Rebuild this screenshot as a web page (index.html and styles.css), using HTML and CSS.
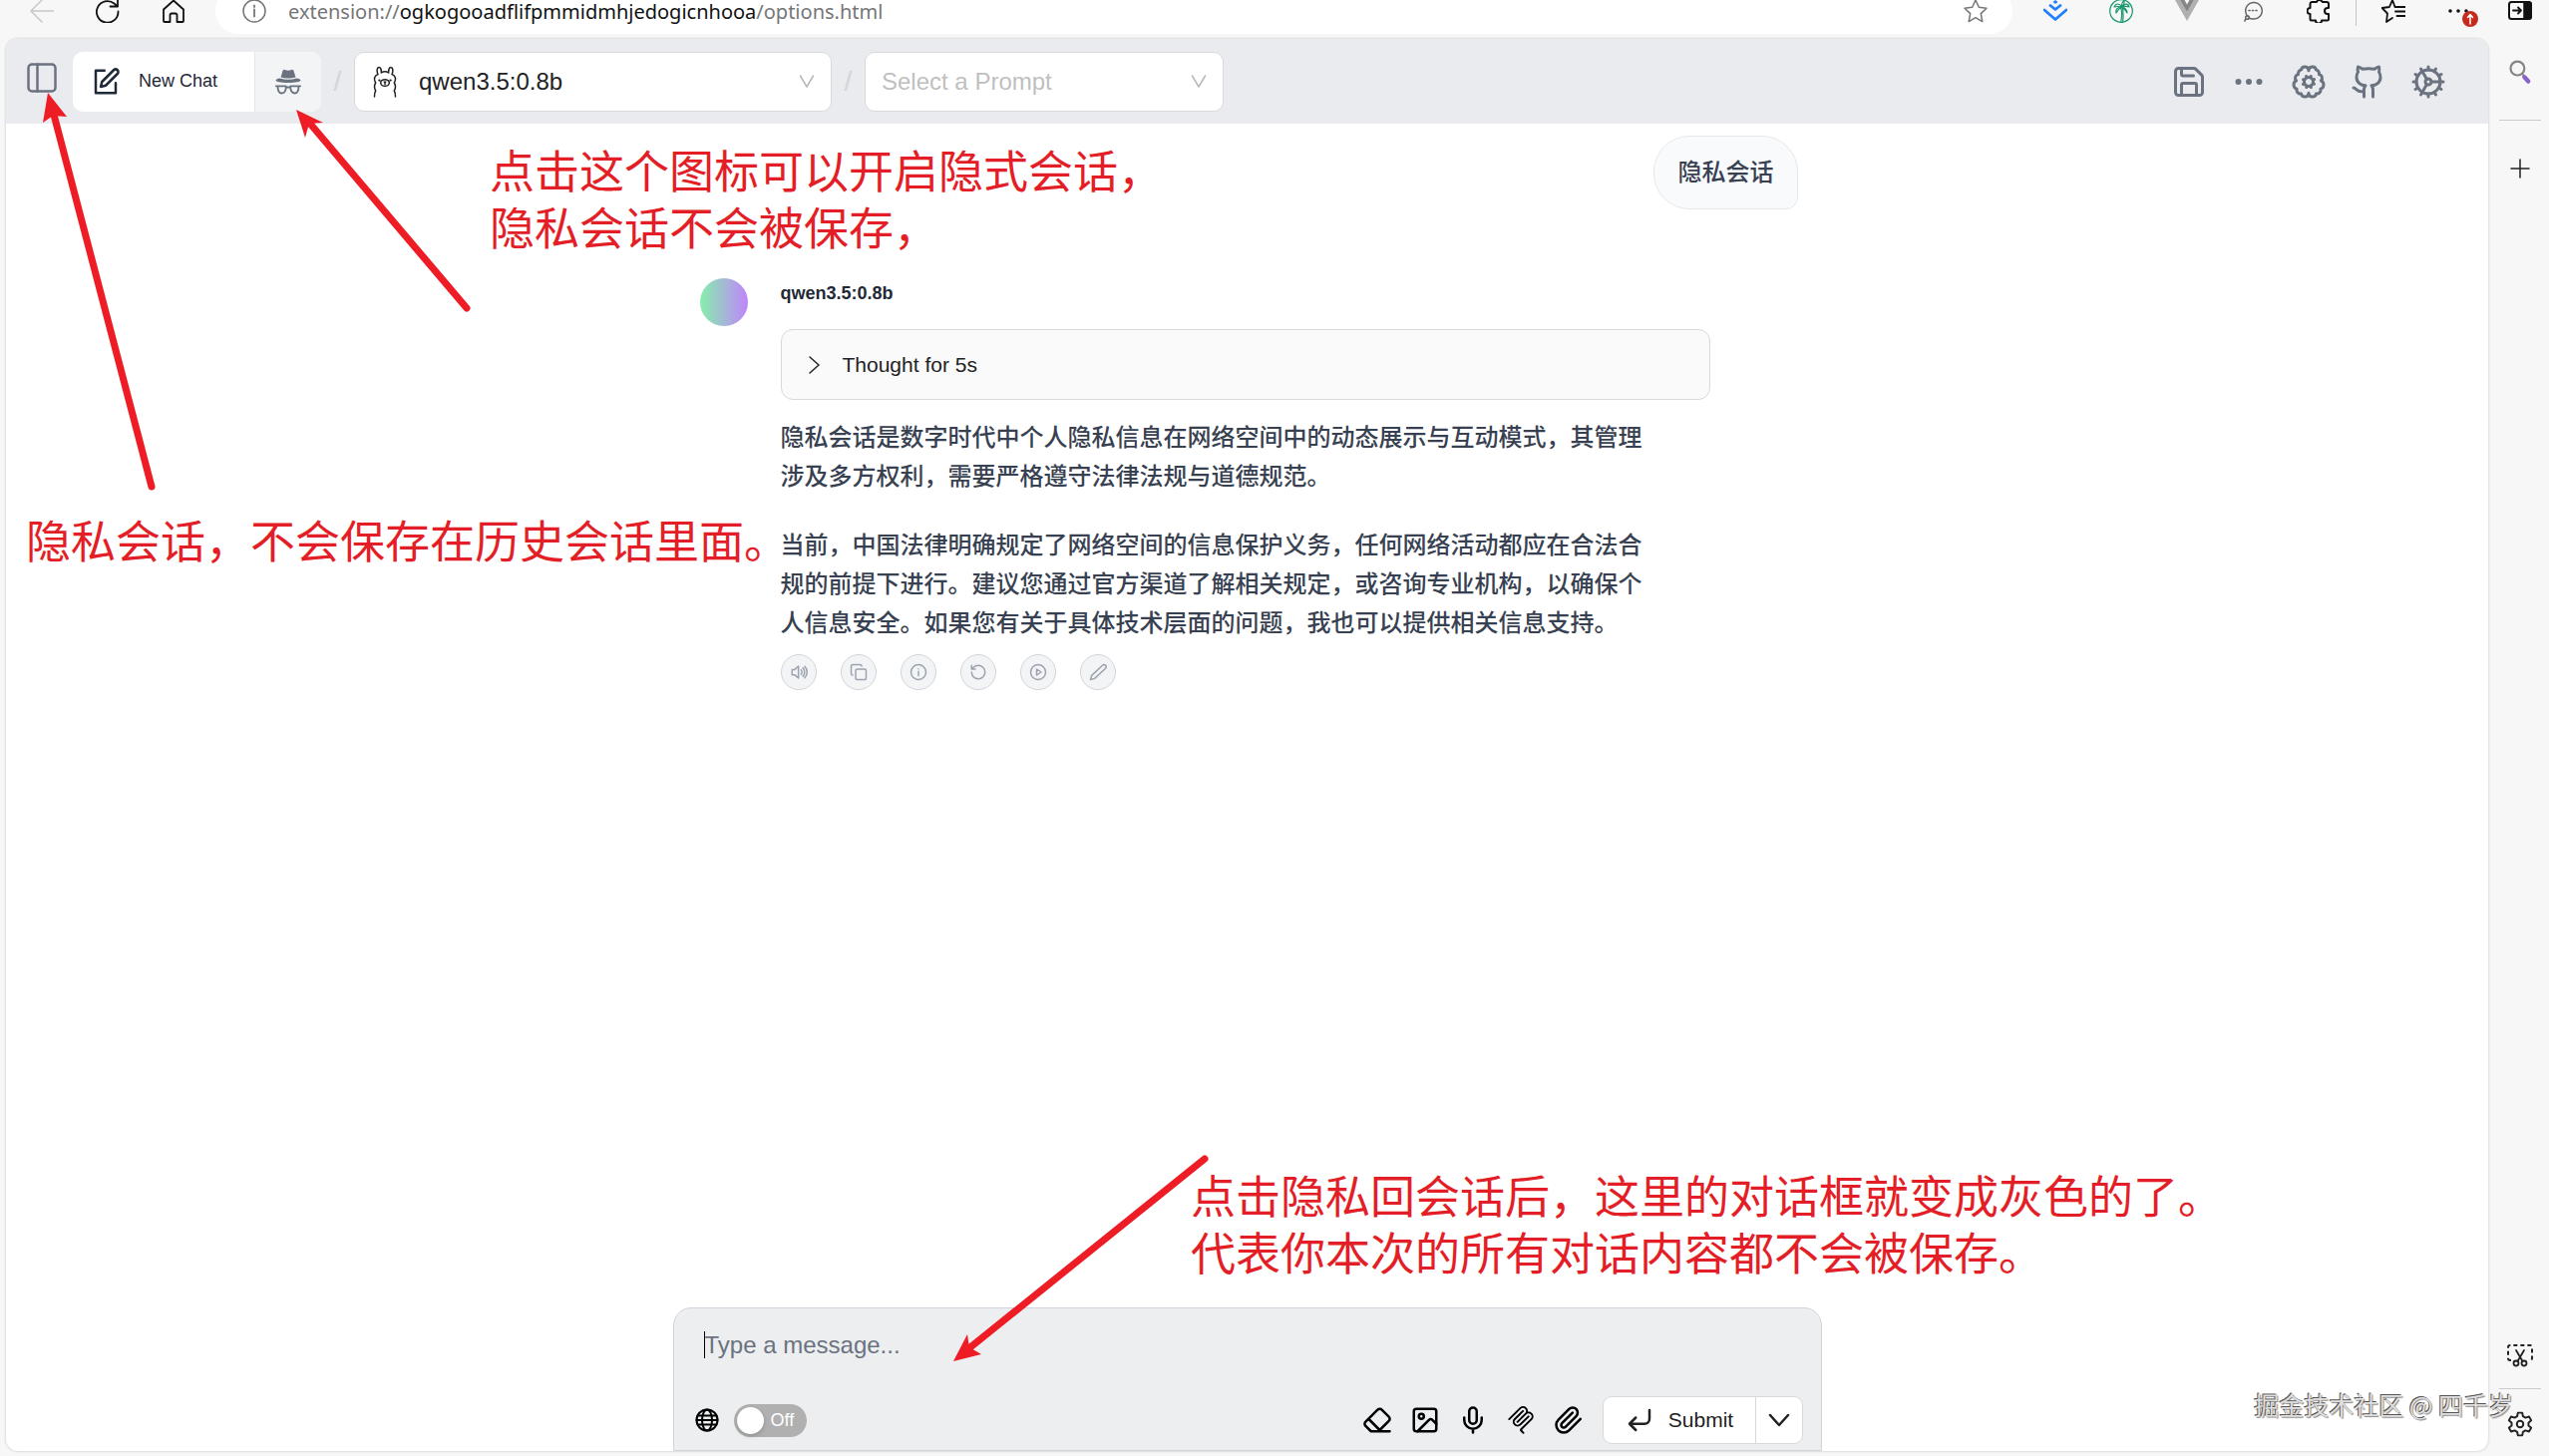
FILE: index.html
```html
<!DOCTYPE html>
<html lang="zh-CN">
<head>
    <meta charset="UTF-8">
    <meta name="viewport" content="width=device-width, initial-scale=1.0">
    <title>Options</title>
    <link rel="stylesheet" href="styles.css">
</head>
<body>

    <!-- Browser bar -->
    <div class="toolbar">
        <div class="nav">
            <button aria-label="Back" class="faded"><svg viewBox="0 0 24 24"><path d="M24 12H1M12 1 1 12l11 11"/></svg></button>
            <button aria-label="Refresh"><svg viewBox="0 0 24 24"><path d="M22.500 12.500A10.800 10.800 0 1 1 18.500 4.500l3 2.500M22 0v7.500h-7.500" stroke-width="1.800"/></svg></button>
            <button aria-label="Home"><svg viewBox="0 0 24 24"><path d="M2 10.500 12 1.500l10 9V22a1 1 0 0 1-1 1h-5.500v-7a1.500 1.500 0 0 0-1.500-1.500h-4A1.500 1.500 0 0 0 8.500 16v7H3a1 1 0 0 1-1-1z" stroke-width="1.800"/></svg></button>
        </div>
        <div class="address">
            <svg class="info" viewBox="0 0 24 24"><circle cx="12" cy="12" r="11"/><path d="M12 10.500v7M12 6.500v1.500" stroke-width="1.800"/></svg>
            <div class="url">extension://<b>ogkogooadflifpmmidmhjedogicnhooa</b>/options.html</div>
            <button aria-label="Favorite" class="star"><svg viewBox="0 0 24 24"><path d="m12 1 3.300 7.200 7.700 1-5.700 5.400 1.500 8L12 18.700l-6.800 3.900 1.500-8L1 9.200l7.700-1z"/></svg></button>
        </div>
        <div class="tools">
            <button aria-label="Juejin"><svg viewBox="0 0 24 24" class="juejin"><path d="m9.500 3 2.500-2 2.500 2L12 5z" fill="currentColor" stroke="none"/><path d="m7 6.500 5 4 5-4M1 11l11 9.500L23 11" stroke-width="2.800"/></svg></button>
            <button aria-label="Palm"><svg viewBox="0 0 24 24" class="palm"><circle cx="12" cy="12" r="11.300"/><path d="M12 9c.8 4 .8 9-.2 13.500M13.500 9c.6 4 .6 9 .2 13.500M13 8C10 4 6.500 4 5 8c3-1 5-.5 8 0zm0 0c3-4 6-3.500 7 0-2-1-4-1-7 0zm0 0C9 8 6 10 7 14c1.500-3 3-4.500 6-6zm0 0c3 1 5 2.500 5 6-1.500-2.500-3-4.500-5-6zm0 0c-1-3 0-5 2-6.500C15.500 4 15 6 13 8z"/></svg></button>
            <button aria-label="Vue"><svg viewBox="0 0 24 24"><path d="M0 1h5l7 12 7-12h5L12 22z" fill="#b0b0b0" stroke="none"/><path d="M5 1h4.500L12 5.500 14.500 1H19l-7 12z" fill="#858585" stroke="none"/></svg></button>
            <button aria-label="Chat" class="grey"><svg viewBox="0 0 24 24"><path d="M7 17.500A8.300 8.300 0 1 1 12 20a9 9 0 0 1-4-1"/><circle cx="6.500" cy="18.500" r="1.800"/><path d="M4.500 20.500 4 22M8 11.500h1M11.500 11.500h1M15 11.500h1" stroke-width="1.700"/></svg></button>
            <button aria-label="Extensions"><svg viewBox="0 0 24 24"><path d="M5 3h5a3 3 0 0 1 5-1l1 1h4a2 2 0 0 1 2 2v4h-1a3 3 0 0 0 0 6h1v5a1.500 1.500 0 0 1-1.500 1.500H15a3 3 0 0 1-6 0H5A1.500 1.500 0 0 1 3.500 20v-5a3 3 0 0 1 0-6V5A2 2 0 0 1 5 3z" stroke-width="2"/></svg></button>
            <span class="line"></span>
            <button aria-label="Favorites"><svg viewBox="0 0 24 24"><path d="M17 8h-3.500L11 1 8 8l-7.500 1 5.500 5.500L5 23l6-4M15.500 8H24M14 12.500h10M15.500 17H24" stroke-width="1.800"/></svg></button>
            <button aria-label="More" class="more"><svg viewBox="0 0 24 24"><g fill="currentColor" stroke="none"><circle cx="3" cy="12" r="1.800"/><circle cx="11" cy="12" r="1.800"/><circle cx="19" cy="12" r="1.800"/></g></svg>
                <svg class="badge" viewBox="0 0 16 16"><circle cx="8" cy="8" r="8" fill="#c42b1c" stroke="none"/><path d="M8 13V4M5.500 6.500 8 3.500l2.500 3" stroke="#fff"/></svg></button>
            <button aria-label="Sidebar" class="last"><svg viewBox="0 0 24 24"><rect x="1" y="3" width="22" height="17" rx="2.500" stroke-width="2"/><path d="M16 3h5a2 2 0 0 1 2 2v13a2 2 0 0 1-2 2h-5z" fill="currentColor"/><path d="M5 11.500h8M10 8.500l3 3-3 3" stroke-width="1.800"/></svg></button>
        </div>
    </div>

    <div class="window">
        <section class="app">

            <header class="header">
                <button class="panel" aria-label="Toggle sidebar"><svg viewBox="0 0 30 30"><rect x="1.500" y="1.500" width="27" height="27" rx="3.500"/><path d="M10.500 1.500v27"/></svg></button>
                <div class="group">
                    <button class="new">
                        <svg viewBox="0 0 24 24"><path d="M11 3H4v18h16v-8"/><path d="M18.400 2.600a2.100 2.100 0 0 1 3 3L12 15l-4 1 1-4z"/></svg>
                        New Chat
                    </button>
                    <button class="private" aria-label="Private chat">
                        <svg viewBox="0 0 26 26"><g fill="currentColor" stroke="none"><path d="M5.500 8.500 7.500 2C7.800 1 8.700.6 9.700 1c2 .9 4.600.9 6.600 0 1-.4 1.900 0 2.200 1l2 6.500c-4.500 1.300-10.500 1.300-15 0z"/><path d="M4.500 9.500c5.500 1.600 11.500 1.600 17 0 2 .4 4 1.200 4 2 0 1.400-5 2.500-12.500 2.500S.5 12.900.5 11.500c0-.8 2-1.600 4-2z"/></g><path d="M.8 17.300h9.700l.8 1.200h3.400l.8-1.200h9.700M2.500 17.500c0 4 1 7 4 7s4.300-3 4.300-6.500M23.500 17.500c0 4-1 7-4 7s-4.300-3-4.300-6.500"/></svg>
                    </button>
                </div>
                <span class="slash">/</span>
                <div class="select model">
                    <svg class="llama" viewBox="0 0 24 32"><path d="M1.500 31c0-3 .2-4.500 1.200-6-1.500-2.500-1.500-5.500 0-8C.5 13.500 1.500 9.500 5 8.500 3.500 5 4 1.500 6 1.500c1.800 0 2.500 2.500 2.300 5.500C10.500 5.500 13.500 5.500 15.700 7c-.2-3 .5-5.500 2.300-5.500 2 0 2.500 3.500 1 7 3.500 1 4.500 5 2.300 8.500 1.500 2.500 1.500 5.500 0 8 1 1.500 1.200 3 1.200 6"/><ellipse cx="12" cy="17" rx="4.300" ry="3.300"/><path d="M12 17v1.500M11.200 16l.8.700.8-.7"/><path d="M6.300 14.500h.2M17.500 14.500h.2" stroke-width="2.200"/></svg>
                    <select aria-label="Model"><option>qwen3.5:0.8b</option></select>
                    <svg class="arrow" viewBox="0 0 16 16"><path d="m1.500 2 6.500 11L14.500 2"/></svg>
                </div>
                <span class="slash">/</span>
                <div class="select prompt">
                    <select aria-label="Prompt"><option>Select a Prompt</option></select>
                    <svg class="arrow" viewBox="0 0 16 16"><path d="m1.500 2 6.500 11L14.500 2"/></svg>
                </div>
                <div class="actions">
                    <button aria-label="Save"><svg viewBox="0 0 24 24"><path d="M15.200 3a2 2 0 0 1 1.400.6l3.800 3.800a2 2 0 0 1 .6 1.400V19a2 2 0 0 1-2 2H5a2 2 0 0 1-2-2V5a2 2 0 0 1 2-2z"/><path d="M17 21v-7a1 1 0 0 0-1-1H8a1 1 0 0 0-1 1v7M7 3v4a1 1 0 0 0 1 1h7"/></svg></button>
                    <button aria-label="More"><svg viewBox="0 0 24 24"><g fill="currentColor" stroke-width="1"><circle cx="5" cy="12" r="1.500"/><circle cx="12" cy="12" r="1.500"/><circle cx="19" cy="12" r="1.500"/></g></svg></button>
                    <button aria-label="Knowledge"><svg viewBox="0 0 24 24"><circle cx="12" cy="12" r="3"/><path d="M12 4.500a2.500 2.500 0 0 0-4.960-.46 2.500 2.500 0 0 0-1.980 3 2.500 2.500 0 0 0-1.320 4.240 3 3 0 0 0 .34 5.580 2.500 2.500 0 0 0 2.960 3.080A2.500 2.500 0 0 0 9.500 22c1.210 0 2.500-.74 2.500-2.500m0-15a2.500 2.500 0 0 1 4.960-.46 2.500 2.500 0 0 1 1.980 3 2.500 2.500 0 0 1 1.320 4.240 3 3 0 0 1-.34 5.580 2.500 2.500 0 0 1-2.960 3.080A2.500 2.500 0 0 1 14.500 22c-1.210 0-2.500-.74-2.500-2.500M15.700 10.400l-.9.400M9.200 13.200l-.9.400M13.600 15.700l-.4-.9M10.800 9.200l-.4-.9M15.700 13.500l-.9-.4M9.200 10.900l-.9-.4M10.500 15.700l.4-.9M13.100 9.200l.4-.9"/></svg></button>
                    <button aria-label="GitHub"><svg viewBox="0 0 24 24"><path d="M15 22v-4a4.800 4.800 0 0 0-1-3.500c3 0 6-2 6-5.500.08-1.250-.27-2.480-1-3.500.28-1.150.28-2.350 0-3.500 0 0-1 0-3 1.500-2.640-.5-5.360-.5-8 0C6 2 5 2 5 2c-.3 1.150-.3 2.350 0 3.500A5.400 5.400 0 0 0 4 9c0 3.500 3 5.500 6 5.500-.39.490-.68 1.050-.85 1.650-.17.600-.22 1.230-.15 1.850v4M9 18c-4.510 2-5-2-7-2"/></svg></button>
                    <button aria-label="Settings"><svg viewBox="0 0 24 24"><circle cx="12" cy="12" r="8"/><circle cx="12" cy="12" r="2"/><path d="M12 2v2M12 22v-2M17 20.660l-1-1.730M11 10.270 7 3.340M20.660 17l-1.730-1M3.340 7l1.730 1M14 12h8M2 12h2M20.660 7l-1.730 1M3.340 17l1.730-1M17 3.340l-1 1.730M11 13.730l-4 6.930"/></svg></button>
                </div>
            </header>

            <main class="chat">
                <div class="user">隐私会话</div>
                <div class="reply">
                    <div class="avatar"></div>
                    <div class="content">
                        <h2>qwen3.5:0.8b</h2>
                        <button class="thought"><svg viewBox="0 0 14 18"><path d="m2 1 9 8-9 8"/></svg>Thought for 5s</button>
                        <div class="prose">
                            <p>隐私会话是数字时代中个人隐私信息在网络空间中的动态展示与互动模式，其管理涉及多方权利，需要严格遵守法律法规与道德规范。</p>
                            <p>当前，中国法律明确规定了网络空间的信息保护义务，任何网络活动都应在合法合规的前提下进行。建议您通过官方渠道了解相关规定，或咨询专业机构，以确保个人信息安全。如果您有关于具体技术层面的问题，我也可以提供相关信息支持。</p>
                        </div>
                        <div class="footer">
                            <button aria-label="Read aloud"><svg viewBox="0 0 24 24"><path d="M3 8.500h3.500L11.500 4v16l-5-4.500H3zM15 9c1.500 1.500 1.500 4.500 0 6M17.500 6.500c3 3 3 8 0 11M20 4.500c4 4 4 11 0 15"/></svg></button>
                            <button aria-label="Copy"><svg viewBox="0 0 24 24"><rect x="8" y="8" width="14" height="14" rx="2"/><path d="M4 16a2 2 0 0 1-2-2V4a2 2 0 0 1 2-2h10a2 2 0 0 1 2 2"/></svg></button>
                            <button aria-label="Info"><svg viewBox="0 0 24 24"><circle cx="12" cy="12" r="10"/><path d="M12 16.500V11M12 7.500v.2"/></svg></button>
                            <button aria-label="Regenerate"><svg viewBox="0 0 24 24"><path d="M3 12a9 9 0 1 0 9-9 9.750 9.750 0 0 0-6.740 2.740L3 8M3 3v5h5"/></svg></button>
                            <button aria-label="Continue"><svg viewBox="0 0 24 24"><circle cx="12" cy="12" r="10"/><path d="m10 8 6 4-6 4z"/></svg></button>
                            <button aria-label="Edit"><svg viewBox="0 0 24 24"><path d="M18 3a2.850 2.830 0 1 1 4 4L7.500 20.500 2 22l1.500-5.500z"/></svg></button>
                        </div>
                    </div>
                </div>
            </main>

            <form class="composer">
                <div class="field"><textarea rows="1" placeholder="Type a message..." aria-label="Message"></textarea></div>
                <div class="controls">
                    <svg class="globe" viewBox="0 0 24 24"><circle cx="12" cy="12" r="10.500"/><ellipse cx="12" cy="12" rx="5" ry="10.500"/><path d="M2.500 7.500h19M1.500 12h21M2.500 16.500h19"/></svg>
                    <label class="switch"><input type="checkbox" aria-label="Web search"><span>Off</span></label>
                    <div class="icons">
                        <button type="button" aria-label="Clear"><svg viewBox="0 0 24 24"><path d="m7 21-4.300-4.300c-1-1-1-2.500 0-3.400l9.600-9.600c1-1 2.500-1 3.400 0l5.600 5.600c1 1 1 2.500 0 3.400L13 21M22 21H7M5 11l9 9"/></svg></button>
                        <button type="button" aria-label="Image"><svg viewBox="0 0 24 24"><rect x="3" y="3" width="18" height="18" rx="2"/><circle cx="9" cy="9" r="2"/><path d="m21 15-3.090-3.090a2 2 0 0 0-2.820 0L6 21"/></svg></button>
                        <button type="button" aria-label="Voice"><svg viewBox="0 0 24 24"><rect x="9" y="2" width="6" height="13" rx="3"/><path d="M19 10v2a7 7 0 0 1-14 0v-2M12 19v3"/></svg></button>
                        <button type="button" aria-label="MCP"><svg viewBox="-1 -1 26 26"><g fill="currentColor" stroke="none"><path d="M15.688 2.343a2.588 2.588 0 00-3.610 0l-9.626 9.440a.863.863 0 01-1.203 0 .823.823 0 010-1.180l9.626-9.440a4.313 4.313 0 016.016 0 4.116 4.116 0 011.204 3.540 4.300 4.300 0 013.609 1.180l.05.05a4.115 4.115 0 010 5.900l-8.706 8.537a.274.274 0 000 .393l1.788 1.754a.823.823 0 010 1.180.863.863 0 01-1.203 0l-1.788-1.753a1.920 1.920 0 010-2.754l8.706-8.538a2.470 2.470 0 000-3.540l-.05-.049a2.588 2.588 0 00-3.607-.003l-7.172 7.034-.002.002-.098.097a.863.863 0 01-1.204 0 .823.823 0 010-1.180l7.273-7.133a2.470 2.470 0 00-.003-3.537z"/><path d="M14.485 4.703a.823.823 0 000-1.180.863.863 0 00-1.204 0l-7.119 6.982a4.115 4.115 0 000 5.900 4.314 4.314 0 006.016 0l7.120-6.982a.823.823 0 000-1.180.863.863 0 00-1.204 0l-7.119 6.982a2.588 2.588 0 01-3.610 0 2.470 2.470 0 010-3.540l7.120-6.982z"/></g></svg></button>
                        <button type="button" aria-label="Attach"><svg viewBox="0 0 24 24"><path d="m21.440 11.050-9.190 9.190a6 6 0 0 1-8.490-8.490l8.570-8.570A4 4 0 1 1 18 8.840l-8.590 8.570a2 2 0 0 1-2.830-2.830l8.490-8.480"/></svg></button>
                    </div>
                    <div class="submit">
                        <button type="button" class="send"><svg viewBox="0 0 24 24"><path d="M9 10l-5 5 5 5M20 4v7a4 4 0 0 1-4 4H4"/></svg>Submit</button>
                        <button type="button" class="drop" aria-label="Send options"><svg viewBox="0 0 24 24"><path d="m3 7 9 10 9-10"/></svg></button>
                    </div>
                </div>
            </form>
        </section>

        <aside class="side">
            <button aria-label="Search"><svg viewBox="0 0 26 30"><circle cx="10" cy="11" r="8" stroke="#858585" stroke-width="2.500"/><path d="m15.500 17 3 4" stroke="#858585" stroke-width="2"/><path d="m18 21 4.500 5" stroke="#8a63c9" stroke-width="5"/></svg></button>
            <hr>
            <button aria-label="Add"><svg viewBox="0 0 26 26"><path d="M13 4v18M4 13h18"/></svg></button>
            <button aria-label="Screenshot" class="bottom"><svg viewBox="0 0 26 26"><path d="M4 18H3a2 2 0 0 1-2-2V5a2 2 0 0 1 2-2h20a2 2 0 0 1 2 2v11a2 2 0 0 1-2 2h-1" stroke-width="2" stroke-dasharray="4 3" stroke-linecap="butt"/><path d="m9 8 6.500 11M17 8l-6.500 11" stroke-width="1.800"/><circle cx="9" cy="21" r="2.500" stroke-width="1.800"/><circle cx="17" cy="21" r="2.500" stroke-width="1.800"/></svg></button>
            <hr>
            <button aria-label="Settings"><svg viewBox="0 0 24 24"><path d="M10 1.500h4l.7 3.300 2.300 1.300 3.300-1 2 3.500-2.500 2.300v2.400l2.500 2.200-2 3.400-3.300-1-2.300 1.300-.7 3.300h-4l-.7-3.300L7 17.900l-3.300 1-2-3.400 2.500-2.200v-2.400L1.700 8.600l2-3.500 3.300 1 2.300-1.300z" stroke-width="1.800"/><circle cx="12" cy="12" r="3" stroke-width="1.800"/></svg></button>
        </aside>
    </div>

    <!-- Notes drawn over the page -->
    <svg class="arrows">
        <path class="shaft" d="M54 115 152 488M311 124 468 309M973 1351l235-189"/>
        <path d="M48 93 43 123l10-7 14 1zM297 110l9 28 4-14 14-1zM956 1365l14-27 2 13 12 7z"/>
    </svg>
    <p class="note note-private">点击这个图标可以开启隐式会话，<br>隐私会话不会被保存，</p>
    <p class="note note-history">隐私会话，不会保存在历史会话里面。</p>
    <p class="note note-input">点击隐私回会话后，这里的对话框就变成灰色的了。<br>代表你本次的所有对话内容都不会被保存。</p>
    <p class="watermark">掘金技术社区 @ 四千岁</p>

</body>
</html>
```

FILE: styles.css
```css
* {
    margin: 0;
    padding: 0;
    box-sizing: border-box;
}

body {
    height: 100vh;
    display: flex;
    flex-direction: column;
    overflow: hidden;
    position: relative;
    background-color: #f7f7f7;
    color: #1f2937;
    font-family: "Liberation Sans", "Noto Sans CJK SC", sans-serif;
}

button, select, textarea {
    font-family: inherit;
    color: inherit;
    background: none;
    border: none;
    outline: none;
}

button {
    display: flex;
    align-items: center;
    justify-content: center;
    cursor: pointer;
}

svg {
    display: block;
    flex: none;
    width: 24px;
    height: 24px;
    fill: none;
    stroke: currentColor;
    stroke-width: 1.5;
    stroke-linecap: round;
    stroke-linejoin: round;
}

/* Browser bar */
.toolbar {
    flex: none;
    height: 51px;
    margin-top: -12px;
    padding: 0 17px 5px 30px;
    display: flex;
    align-items: center;
    color: #111;
}

.nav, .tools {
    display: flex;
    align-items: center;
    gap: 42px;
}

.faded {
    color: #c8c8c8;
}

.grey {
    color: #666;
}

.juejin {
    color: #1e80ff;
}

.palm {
    color: #17966b;
    stroke-width: 1.2;
}

.address {
    flex: 1;
    height: 46px;
    margin: 0 31px 0 30px;
    padding: 0 25px 0 27px;
    display: flex;
    align-items: center;
    gap: 22px;
    border-radius: 23px;
    background-color: white;
    color: #767676;
}

.address .url {
    flex: 1;
    font-family: "Noto Sans", sans-serif;
    font-size: 20px;
}

.address .url b {
    font-weight: 400;
    color: #111;
}

.tools .line {
    width: 1px;
    height: 30px;
    margin: 0 -17px;
    background-color: #c4c4c4;
}

.tools .more {
    position: relative;
}

.tools .badge {
    position: absolute;
    left: 15px;
    top: 12px;
    width: 16px;
    height: 16px;
}

.tools .last {
    margin-left: -5px;
}

/* Window */
.window {
    flex: 1;
    min-height: 0;
    display: flex;
}

.app {
    flex: 1;
    margin: 0 0 5px 6px;
    display: flex;
    flex-direction: column;
    overflow: hidden;
    border-radius: 12px;
    background-color: white;
    box-shadow: 0 0 2px 1px #dcdcdc;
}

.header {
    flex: none;
    height: 85px;
    padding: 0 42px 0 21px;
    display: flex;
    align-items: center;
    background-color: #e9ebee;
}

.panel {
    margin: 0 16px 8px 0;
    color: #6b7280;
}

.panel svg {
    width: 30px;
    height: 30px;
    stroke-width: 2.5;
}

.group {
    height: 60px;
    display: flex;
    overflow: hidden;
    border-radius: 10px;
    background-color: white;
}

.new {
    width: 182px;
    padding-left: 18px;
    justify-content: flex-start;
    gap: 18px;
    font-size: 18px;
}

.new svg {
    width: 30px;
    height: 30px;
    stroke-width: 2;
}

.private {
    width: 67px;
    border-left: 1px solid #e5e7eb;
    background-color: #f3f4f6;
    color: #6b7280;
}

.private svg {
    width: 26px;
    height: 26px;
    stroke-width: 1.8;
}

.slash {
    width: 33px;
    text-align: center;
    font-size: 28px;
    color: #d1d5db;
}

.select {
    position: relative;
    height: 60px;
}

.select.model {
    width: 479px;
}

.select.prompt {
    width: 360px;
}

.select select {
    width: 100%;
    height: 100%;
    padding: 0 16px;
    appearance: none;
    border: 1px solid #d9d9d9;
    border-radius: 10px;
    background-color: white;
    font-size: 24px;
}

.select.model select {
    padding-left: 64px;
    color: #222;
}

.select.prompt select {
    color: #bfbfbf;
}

.select .arrow {
    position: absolute;
    right: 17px;
    top: 22px;
    width: 16px;
    height: 16px;
    color: #b8b8b8;
}

.select .llama {
    position: absolute;
    left: 19px;
    top: 14px;
    height: 32px;
    color: #222;
}

.actions {
    margin-left: auto;
    display: flex;
    gap: 24px;
    color: #6b7280;
}

.actions svg {
    width: 36px;
    height: 36px;
    stroke-width: 2;
}

/* Conversation */
.chat {
    flex: 1;
    width: 100%;
    max-width: 1152px;
    margin: 0 auto;
    padding: 12px 24px 12px 27px;
}

.user {
    width: fit-content;
    margin-left: auto;
    padding: 16px 23px 17px 24px;
    border: 1px solid #e5e7eb;
    border-radius: 36px 36px 12px 36px;
    background-color: #f9fafb;
    font-size: 24px;
    font-weight: 500;
    line-height: 39px;
    color: #374151;
}

.reply {
    margin-top: 69px;
    display: flex;
    gap: 33px;
}

.avatar {
    flex: none;
    width: 48px;
    height: 48px;
    border-radius: 50%;
    background: linear-gradient(to right, #86efac, #c084fc);
}

.content {
    flex: 1;
}

.content h2 {
    font-size: 18px;
    line-height: 30px;
}

.thought {
    width: 100%;
    max-width: 932px;
    height: 71px;
    margin: 21px 0 18px;
    padding: 0 26px;
    justify-content: flex-start;
    gap: 21px;
    border: 1px solid #d9d9d9;
    border-radius: 12px;
    background-color: #fafafa;
    color: #222;
    font-size: 21px;
}

.thought svg {
    width: 14px;
    height: 18px;
}

.prose {
    max-width: 880px;
    font-size: 24px;
    font-weight: 500;
    line-height: 39px;
    color: #374151;
}

.prose p + p {
    margin-top: 30px;
}

.footer {
    margin-top: 12px;
    display: flex;
    gap: 24px;
}

.footer button {
    width: 36px;
    height: 36px;
    border: 1px solid #d1d5db;
    border-radius: 50%;
    background-color: #f3f4f6;
    color: #9ca3af;
}

.footer svg {
    width: 18px;
    height: 18px;
    stroke-width: 2;
}

/* Message box */
.composer {
    flex: none;
    width: 100%;
    max-width: 1152px;
    margin: 0 auto;
    padding: 20px 18px 6px 20px;
    border: 1px solid #d1d5db;
    border-radius: 18px 18px 0 0;
    background-color: #eceef0;
}

.field {
    height: 68px;
    padding: 3px 10px;
    display: flex;
}

.field::before {
    content: "";
    width: 1px;
    height: 27px;
    background-color: black;
}

.field textarea {
    flex: 1;
    height: 27px;
    resize: none;
    font-size: 24px;
    line-height: 27px;
}

.field textarea::placeholder {
    color: #6b7280;
}

.controls {
    display: flex;
    align-items: center;
    color: black;
}

.globe {
    margin: 0 15px 0 1px;
    stroke-width: 2;
}

.switch input {
    position: absolute;
    opacity: 0;
}

.switch span {
    display: flex;
    align-items: center;
    gap: 7px;
    width: 73px;
    height: 33px;
    padding: 3px;
    border-radius: 17px;
    background-color: #b0b0b0;
    color: white;
    font-size: 18px;
}

.switch span::before {
    content: "";
    width: 27px;
    height: 27px;
    border-radius: 50%;
    background-color: white;
    box-shadow: 0 2px 4px rgba(0, 35, 11, .2);
}

.icons {
    margin: 0 19px 0 auto;
    display: flex;
    gap: 18px;
}

.icons svg {
    width: 30px;
    height: 30px;
    stroke-width: 2;
}

.submit {
    display: flex;
    height: 48px;
    border: 1px solid #d9d9d9;
    border-radius: 9px;
    background-color: white;
    color: #222;
}

.send {
    width: 152px;
    gap: 14px;
    font-size: 21px;
}

.send svg {
    width: 30px;
    height: 30px;
    stroke-width: 2;
}

.drop {
    width: 47px;
    border-left: 1px solid #d9d9d9;
}

.drop svg {
    stroke-width: 2.5;
}

/* Right strip */
.side {
    width: 61px;
    padding: 20px 0 19px 2px;
    display: flex;
    flex-direction: column;
    align-items: center;
    color: #222;
}

.side svg {
    width: 26px;
    height: 26px;
}

.side hr {
    width: 42px;
    height: 1px;
    margin: 35px 0;
    border: none;
    background-color: #ccc;
}

.side .bottom {
    margin-top: auto;
}

.side .bottom + hr {
    margin: 20px 0 22px;
}

/* Notes */
.arrows {
    position: absolute;
    left: 0;
    top: 0;
    width: 100%;
    height: 100%;
    pointer-events: none;
    fill: #ee1c25;
    stroke: none;
}

.arrows .shaft {
    stroke: #ee1c25;
    stroke-width: 7;
}

.note {
    position: absolute;
    white-space: nowrap;
    font-family: "Noto Sans CJK SC", sans-serif;
    font-size: 45px;
    line-height: 57px;
    color: #e41e26;
}

.note-private {
    left: 491px;
    top: 141px;
}

.note-history {
    left: 26px;
    top: 512px;
}

.note-input {
    left: 1194px;
    top: 1169px;
}

.watermark {
    position: absolute;
    right: 36px;
    bottom: 34px;
    white-space: nowrap;
    font-family: "Noto Sans CJK SC", sans-serif;
    font-size: 25px;
    line-height: 36px;
    color: #dedede;
    text-shadow: -1px -1px 0 #555, 1px 1px 1px #888;
}
```
